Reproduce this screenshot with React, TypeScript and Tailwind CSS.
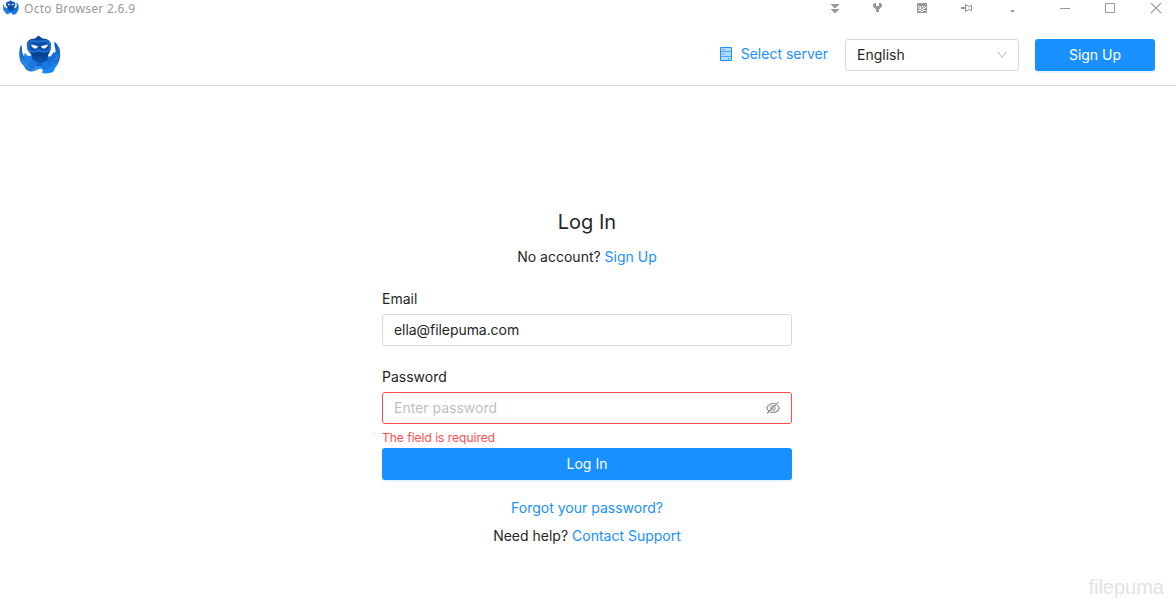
import React from "react";
import { AiOutlineDown, AiOutlineEyeInvisible } from "react-icons/ai";

function Octopus({ className }: { className: string }) {
  return (
    <svg viewBox="0 0 42 38" className={className}>
      <defs>
        <linearGradient id="arm" x1="0" y1="0" x2="0" y2="1">
          <stop offset="0" stopColor="#0f5cba" />
          <stop offset="0.6" stopColor="#1873d9" />
          <stop offset="1" stopColor="#2f93fa" />
        </linearGradient>
        <linearGradient id="head" x1="0" y1="0" x2="0" y2="1">
          <stop offset="0" stopColor="#0b4a9c" />
          <stop offset="0.6" stopColor="#08408f" />
          <stop offset="1" stopColor="#1263c6" />
        </linearGradient>
      </defs>
      <path
        d="M2 9C0 14 0 19 .5 22c.5 4 2 6 4 8 3 6 7 7 12 5l5-2c4 3 8 3 13 1 2-2 4-4 5-7 2-4 2-10 1-14-1-2-2-4-5-7-1 3 1 6 1 9 0 4-2 7-5 8l-4-4H13l-4 4c-4 0-5-4-6-7 0-3 0-5-1-7z"
        fill="url(#arm)"
      />
      <path d="M6 17c1 3 4 4 6 3l2 6-6 4c-3-3-4-8-2-13z" fill="#1f80e6" />
      <path d="M34 17c-1 3-3 5-5 4l-1 5 7 3c3-3 4-8 3-12z" fill="#176fd2" />
      <path
        d="M19.500 0l4 3c6 0 9 3 8.500 8 0 4-2 6-3 9-1 4 0 6 3 9-3 3-7 3-11 1-4 2-8 2-11-1 3-3 4-5 3-9-2-3-5-5-5-9C7 6 10 3 16 3z"
        fill="url(#head)"
      />
      <path
        d="M9 11c-.5-4 3-6 7-5.500 3 .8 5 .8 8 0 4-.5 7.500 1.500 7 5.500 0 4-3 6-7 5l-4-1-4 1c-4 1-7-1-7-5z"
        fill="#0c4ea6"
        stroke="#1b70d2"
        strokeWidth="2"
      />
      <path d="M12.500 9.300l6.200 1.700c-.5 2.500-5.700 2.500-6.200-1.700zm16 0L22.300 11c.5 2.500 5.700 2.500 6.200-1.700z" fill="#fff" stroke="#fff" strokeWidth="0.600" />
      <path d="M13 24c2 0 3 2 6 4l-4 7c-4 2-7 0-9-3 4-1 6-4 7-8zM22 27c3 1 5-1 6-3 1 3 3 5 7 5l-2 4-9 1z" fill="#1878de" />
      <path d="M24 34c5 0 9-3 11-5 2 5 0 8-5 8.500-2 .5-5 .5-7 0z" fill="#1686f8" />
      <path d="M3 23c2 5 4 8 9 11M38 20c-1 4-3 7-6 8M17 31c-1 2-2 3-5 3" stroke="#62adff" strokeWidth="1" strokeDasharray="1 1.200" fill="none" />
    </svg>
  );
}

function ServerIcon() {
  return (
    <svg width="16" height="16" viewBox="0 0 16 16" fill="none" stroke="#1890ff">
      <path d="M2.500 1.500h11v13h-11z" fill="#b5dcff" />
      <path d="M3 5.500h10M3 10.500h10" strokeOpacity="0.7" />
      <path d="M4 3.500h3M4 8h3" strokeOpacity="0.6" />
      <path d="M10 12h1.200v1.200H10z" fill="#1890ff" stroke="none" />
    </svg>
  );
}

function Glyph({ className, children }: { className: string; children: React.ReactNode }) {
  return (
    <button type="button" className={className}>
      <svg width="11" height="11" viewBox="0 0 11 11" fill="#999" shapeRendering="crispEdges">
        {children}
      </svg>
    </button>
  );
}

function TitleBar() {
  return (
    <div className="flex h-[17px] items-start">
      <Octopus className="ml-[3px] h-[15px] w-4" />
      <span className="ml-[5px] mt-px font-['Noto_Sans','Open_Sans',sans-serif] text-[12px] leading-4 tracking-[0.27px] text-[#999]">
        Octo Browser 2.6.9
      </span>
      <div className="ml-auto mr-[14px] mt-[3px] flex">
        <Glyph className="">
          <path d="M1 1h8v1H8v1H7v1H6v1H4V4H3V3H2V2H1zM1 6h8v1H8v1H7v1H6v1H4V9H3V8H2V7H1z" />
        </Glyph>
        <Glyph className="ml-[31px]">
          <path d="M2 0h2v3h3V0h2v1h1v3H9v1H8v1H7v3H4V6H3V5H2V4H1V1h1z" />
        </Glyph>
        <Glyph className="ml-[34px]">
          <path
            fillRule="evenodd"
            d="M0 0h10v10H0zM2 3v1h1V3zM7 3v1h1V3zM4 3v1h2V3zM1 4v1h1V4zM3 4v1h1V4zM6 4v1h1V4zM8 4v1h1V4zM2 5v1h2V5zM6 5v1h2V5zM4 6v1h2V6zM1 7v1h2V7zM3 7v1h1V7zM6 7v1h3V7zM4 8v1h2V8z"
          />
        </Glyph>
        <Glyph className="ml-[33px]">
          <path d="M0 4h4v2H0zM4 1h1v8H4zM5 2h2v1H5zM5 7h2v1H5zM7 3h2v1H7zM7 6h2v1H7zM9 2h2v1H9zM9 7h2v1H9zM10 2h1v6h-1z" />
        </Glyph>
        <Glyph className="ml-[35px]">
          <path d="M4 7h3v2H4z" />
        </Glyph>
        <Glyph className="ml-[42px]">
          <path d="M0 5h10v1H0z" />
        </Glyph>
        <Glyph className="ml-[34px]">
          <path fillRule="evenodd" d="M0 0h10v10H0zM1 1v8h8V1z" />
        </Glyph>
        <Glyph className="ml-[35px]">
          <path d="M0 0L10 10M10 0L0 10" stroke="#999" strokeWidth="1.1" shapeRendering="auto" />
        </Glyph>
      </div>
    </div>
  );
}

function Header() {
  return (
    <header className="flex h-[69px] items-start border-b border-[#d9d9d9] pr-[21px]">
      <Octopus className="ml-[19px] mt-[18px] h-[39px] w-[42px]" />
      <a className="ml-auto mt-[26px] flex items-center text-[#1890ff]">
        <ServerIcon />
        <span className="ml-[7px]">Select server</span>
      </a>
      <div className="ml-[17px] mt-[22px] flex h-8 w-[174px] items-center justify-between rounded-[3px] border border-[#d9d9d9] pl-[11px] pr-[10px]">
        English
        <AiOutlineDown className="size-3 text-[#bfbfbf]" />
      </div>
      <button
        type="button"
        className="ml-4 mt-[22px] h-8 w-[120px] rounded-[3px] bg-[#1890ff] text-white shadow-[0_2px_0_rgba(24,144,255,0.1)]"
      >
        Sign Up
      </button>
    </header>
  );
}

export default function App() {
  return (
    <div className="flex h-[609px] w-[1176px] flex-col overflow-hidden bg-white font-['Inter',sans-serif] text-[14px] leading-[22px] text-[#262626]">
      <TitleBar />
      <Header />
      <main className="ml-[382px] flex w-[410px] flex-col pt-[122px]">
        <h1 className="text-center text-[20px] leading-7">Log In</h1>
        <p className="mt-[10px] text-center">
          No account? <a className="text-[#1890ff]">Sign Up</a>
        </p>
        <label className="mt-5">Email</label>
        <input
          className="mt-1 h-8 rounded-[3px] border border-[#d9d9d9] px-[11px] pb-[2px] tracking-[-0.06px] outline-none"
          defaultValue="ella@filepuma.com"
        />
        <label className="mt-5">Password</label>
        <div className="mt-1 flex h-8 items-center rounded-[3px] border border-[#ff4d4f] pl-[11px] pr-[10px]">
          <input className="min-w-0 flex-1 outline-none placeholder:text-[#bfbfbf]" placeholder="Enter password" />
          <AiOutlineEyeInvisible className="size-4 text-[#8c8c8c]" />
        </div>
        <p className="mt-[3px] h-[21px] text-[12px] text-[#ff4d4f]">The field is required</p>
        <button type="button" className="h-8 rounded-[3px] bg-[#1890ff] text-white shadow-[0_2px_0_rgba(24,144,255,0.1)]">
          Log In
        </button>
        <a className="mt-[17px] text-center text-[#1890ff]">Forgot your password?</a>
        <p className="mt-[6px] text-center">
          Need help? <a className="text-[#1890ff]">Contact Support</a>
        </p>
      </main>
      <div className="mr-3 mt-auto pb-[11px] text-right font-['Liberation_Sans',sans-serif] text-[20px] leading-[22px] text-[#e2e2e2]">
        filepuma
      </div>
    </div>
  );
}
